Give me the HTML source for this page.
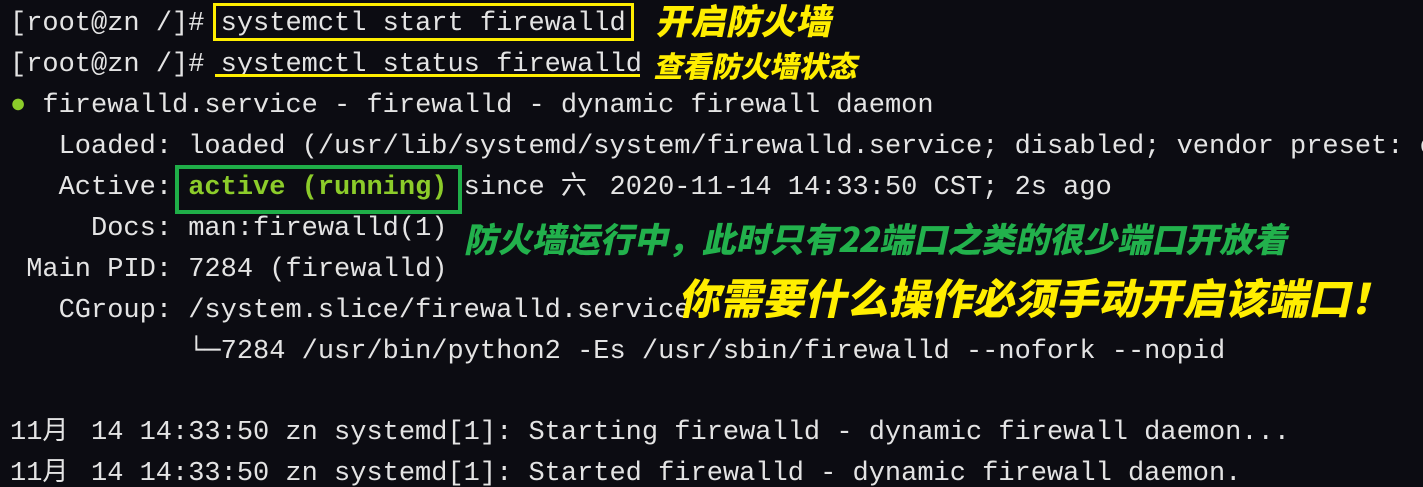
<!DOCTYPE html>
<html><head><meta charset="utf-8"><style>
html,body{margin:0;padding:0;background:#0c0c12;width:1423px;height:487px;overflow:hidden;position:relative}
.l{position:absolute;left:10px;height:41px;margin:0;font:27px/41px "Liberation Mono","Noto Sans CJK SC",monospace;color:#e4e4e4;white-space:pre;overflow:visible}
.c{display:inline-block;width:32.4px;line-height:20px;vertical-align:baseline;font-family:"Noto Sans CJK SC",sans-serif;font-size:26px}
.g{color:#8ccc2a;font-weight:bold}
.a{position:absolute;font-family:"Noto Sans CJK SC","WenQuanYi Zen Hei",sans-serif;font-weight:900;white-space:nowrap;transform:skewX(-12deg);transform-origin:left bottom}
.y{color:#ffee00}
.gr{color:#22b14c}
</style></head><body>
<div class="l" style="top:4px">[root@zn /]# systemctl start firewalld</div>
<div class="l" style="top:45px">[root@zn /]# systemctl status firewalld</div>
<div class="l" style="top:86px"><span class="g">●</span> firewalld.service - firewalld - dynamic firewall daemon</div>
<div class="l" style="top:127px">   Loaded: loaded (/usr/lib/systemd/system/firewalld.service; disabled; vendor preset: e</div>
<div class="l" style="top:168px">   Active: <span class="g">active (running)</span> since <span class="c">六</span> 2020-11-14 14:33:50 CST; 2s ago</div>
<div class="l" style="top:209px">     Docs: man:firewalld(1)</div>
<div class="l" style="top:250px"> Main PID: 7284 (firewalld)</div>
<div class="l" style="top:291px">   CGroup: /system.slice/firewalld.service</div>
<div class="l" style="top:332px">           └─7284 /usr/bin/python2 -Es /usr/sbin/firewalld --nofork --nopid</div>
<div class="l" style="top:413px">11<span class="c">月</span> 14 14:33:50 zn systemd[1]: Starting firewalld - dynamic firewall daemon...</div>
<div class="l" style="top:454px">11<span class="c">月</span> 14 14:33:50 zn systemd[1]: Started firewalld - dynamic firewall daemon.</div>
<div style="position:absolute;left:213px;top:3px;width:415px;height:32px;border:3px solid #ffee00"></div>
<div style="position:absolute;left:215px;top:74px;width:425px;height:3px;background:#ffee00"></div>
<div style="position:absolute;left:175px;top:165px;width:279px;height:41px;border:4px solid #1fae48"></div>
<div class="a y" style="left:654px;top:-1px;font-size:35px;line-height:42px">开启防火墙</div>
<div class="a y" style="left:652px;top:46px;font-size:29px;line-height:38px">查看防火墙状态</div>
<div class="a gr" style="left:462px;top:216px;font-size:34px;line-height:44px">防火墙运行中，此时只有22端口之类的很少端口开放着</div>
<div class="a y" style="left:676px;top:270px;font-size:42px;line-height:54px">你需要什么操作必须手动开启该端口！</div>
</body></html>
